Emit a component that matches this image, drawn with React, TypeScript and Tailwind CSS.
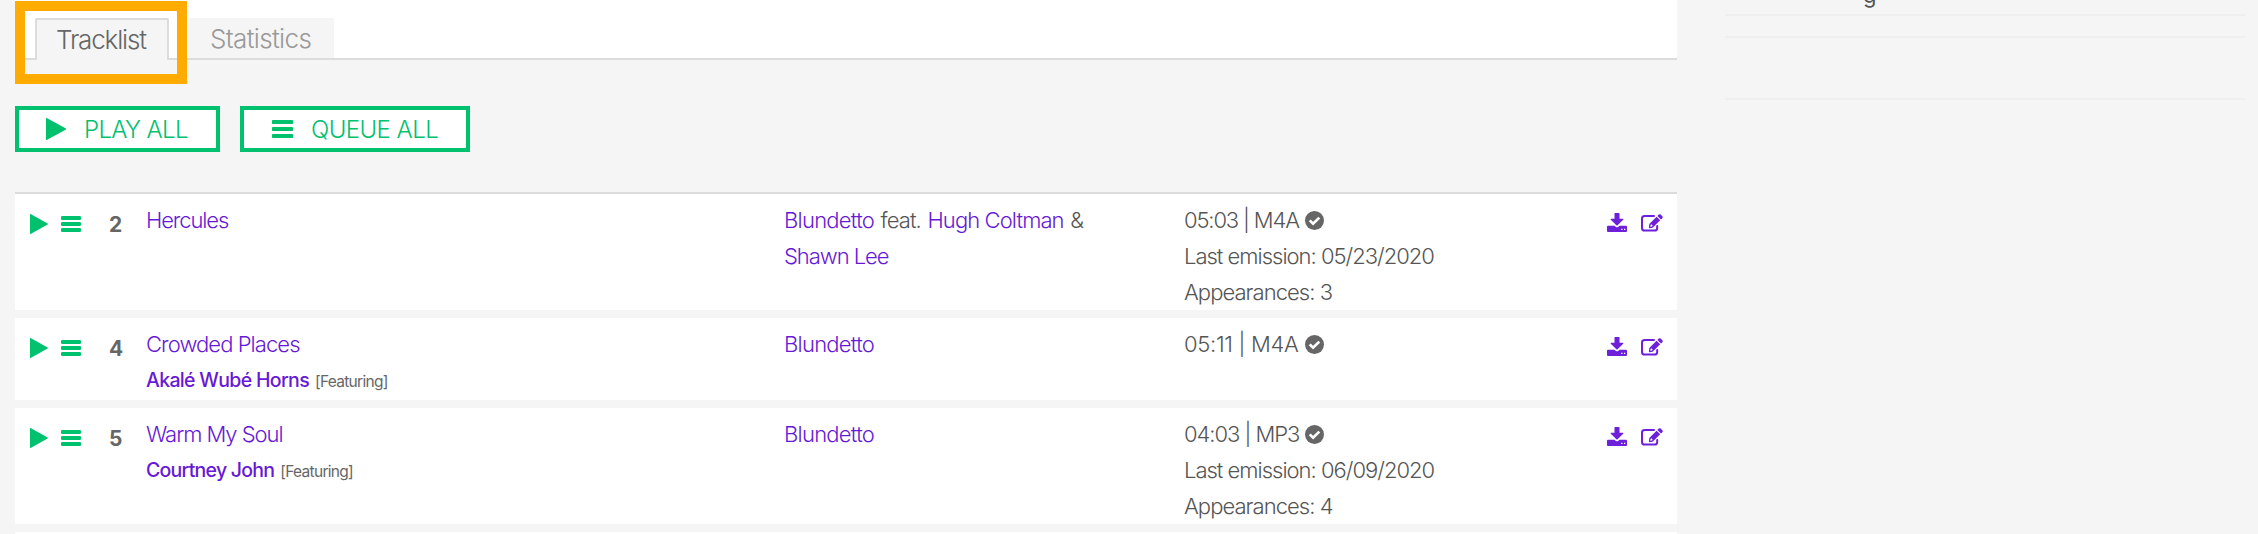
import React from "react";

const PlayIcon = ({ className }: { className: string }) => (
  <svg viewBox="0 0 18 20" preserveAspectRatio="none" className={className} fill="currentColor">
    <path d="M0 0.2Q0-.3.6 0L17.6 9.4Q18.4 10 17.6 10.6L.6 20Q0 20.3 0 19.8Z" />
  </svg>
);

const BarsIcon = () => (
  <svg viewBox="0 0 20 16" className="h-4 w-5" fill="currentColor">
    <rect width="20" height="4" rx="1.2" />
    <rect y="6" width="20" height="4" rx="1.2" />
    <rect y="12" width="20" height="4" rx="1.2" />
  </svg>
);

const QueueIcon = () => (
  <svg viewBox="0 0 21 18" className="h-[18px] w-[21px]" fill="currentColor">
    <rect width="21" height="4" rx="0.8" />
    <rect y="7" width="21" height="4" rx="0.8" />
    <rect y="14" width="21" height="4" rx="0.8" />
  </svg>
);

const CheckIcon = () => (
  <svg viewBox="0 0 19 19" className="ml-[6px] h-[19px] w-[19px]">
    <circle cx="9.5" cy="9.5" r="9.5" fill="#666" />
    <path d="M4.7 9.4L8.1 12.7L14.3 6.6" fill="none" stroke="#fff" strokeWidth="2.7" />
  </svg>
);

const DownloadIcon = () => (
  <svg viewBox="0 0 20 19" className="h-[19px] w-5" fill="currentColor">
    <path d="M8 0H12Q12.5 0 12.5 .5V5.8H15.8Q16.8 5.9 16.2 6.7L10.6 12.2Q10 12.7 9.4 12.2L3.8 6.7Q3.2 5.9 4.2 5.8H7.5V.5Q7.5 0 8 0Z" />
    <path
      fillRule="evenodd"
      d="M1 12.7H7.4L8.9 14Q10 14.7 11.1 14L12.6 12.7H19Q20 12.7 20 13.7V18Q20 19 19 19H1Q0 19 0 18V13.7Q0 12.7 1 12.7ZM14.2 15.7V17H15.5V15.7ZM17 15.7V17H18.3V15.7Z"
    />
  </svg>
);

const EditIcon = () => (
  <svg viewBox="0 0 22 18" className="h-[18px] w-[22px]">
    <path
      d="M13 2H3.6Q1 2 1 4.6V13.9Q1 16.5 3.6 16.5H13.6Q16.2 16.5 16.2 13.9V12"
      fill="none"
      stroke="currentColor"
      strokeWidth="2"
      strokeLinecap="round"
    />
    <path
      fillRule="evenodd"
      fill="currentColor"
      d="M15.6 2.7L19.2 6.3L11.6 13.7L8.6 14.2Q7.8 14.2 7.9 13.4L8.3 10ZM9.6 10.9L9.3 12.8L11 12.5L11.7 11.8L10.4 10.2Z"
    />
    <path fill="currentColor" d="M16.4 1.9L17.7.6Q18.7-.3 19.7.6L21.3 2.2Q22.2 3.2 21.3 4.2L20 5.5Z" />
  </svg>
);

type Part = { text: string; cls: string; link?: boolean };
type Track = {
  n: string;
  title: Part;
  guest?: Part;
  artists: Part[][];
  time: Part;
  info: Part[];
  height: string;
};

const blundetto: Part = { text: "Blundetto", cls: "tracking-[-0.75px]", link: true };

const tracks: Track[] = [
  {
    n: "2",
    title: { text: "Hercules", cls: "tracking-[-1.1px]" },
    artists: [
      [
        blundetto,
        { text: "feat.", cls: "tracking-[-0.9px]" },
        { text: "Hugh Coltman", cls: "tracking-[-0.9px]", link: true },
        { text: "&", cls: "tracking-[-0.9px]" },
      ],
      [{ text: "Shawn Lee", cls: "tracking-[-1.05px]", link: true }],
    ],
    time: { text: "05:03 | M4A", cls: "tracking-[-1.15px]" },
    info: [
      { text: "Last emission: 05/23/2020", cls: "tracking-[-1px]" },
      { text: "Appearances: 3", cls: "tracking-[-0.95px]" },
    ],
    height: "h-[116px]",
  },
  {
    n: "4",
    title: { text: "Crowded Places", cls: "tracking-[-0.93px]" },
    guest: { text: "Akalé Wubé Horns", cls: "tracking-[-0.67px]" },
    artists: [[blundetto]],
    time: { text: "05:11 | M4A", cls: "tracking-[-0.3px]" },
    info: [],
    height: "h-[82px]",
  },
  {
    n: "5",
    title: { text: "Warm My Soul", cls: "tracking-[-1.05px]" },
    guest: { text: "Courtney John", cls: "tracking-[-0.75px]" },
    artists: [[blundetto]],
    time: { text: "04:03 | MP3", cls: "tracking-[-1.05px]" },
    info: [
      { text: "Last emission: 06/09/2020", cls: "tracking-[-1px]" },
      { text: "Appearances: 4", cls: "tracking-[-0.95px]" },
    ],
    height: "h-[116px]",
  },
];

function TrackRow({ t }: { t: Track }) {
  return (
    <div className={"flex shrink-0 whitespace-nowrap bg-white pt-2 pl-[15px] leading-9 " + t.height}>
      <div className="flex w-[79px] gap-[13px] text-[#00c16e]">
        <PlayIcon className="mt-3 h-5 w-[18px]" />
        <div className="mt-[14px]">
          <BarsIcon />
        </div>
      </div>
      <div className="w-[37px] pt-[5px] text-[21px] font-bold text-[#666]">{t.n}</div>
      <div className="w-[638px] text-[#6719d6]">
        <div className={t.title.cls}>{t.title.text}</div>
        {t.guest && (
          <div className="flex items-baseline gap-[6px]">
            <span className={"text-[19.5px] font-medium " + t.guest.cls}>{t.guest.text}</span>
            <span className="text-[15.5px] font-normal tracking-[-0.7px] text-[#666]">[Featuring]</span>
          </div>
        )}
      </div>
      <div className="w-[400px]">
        {t.artists.map((line, i) => (
          <div key={i} className="flex gap-[6.5px]">
            {line.map((p) => (
              <span key={p.text} className={(p.link ? "text-[#6719d6] " : "text-[#555] ") + p.cls}>
                {p.text}
              </span>
            ))}
          </div>
        ))}
      </div>
      <div className="w-[423px] text-[#555]">
        <div className="flex items-center">
          <span className={"w-[115px] " + t.time.cls}>{t.time.text}</span>
          <CheckIcon />
        </div>
        {t.info.map((p) => (
          <div key={p.text} className={p.cls}>
            {p.text}
          </div>
        ))}
      </div>
      <div className="flex gap-[14px] pt-[11px] text-[#6d1fd9]">
        <DownloadIcon />
        <div className="pt-px">
          <EditIcon />
        </div>
      </div>
    </div>
  );
}

export default function App() {
  return (
    <div className="flex h-[534px] w-[2258px] overflow-hidden bg-[#f5f5f5] pl-[15px] font-['Inter','Liberation_Sans',sans-serif] text-[22px] font-light">
      <main className="relative flex w-[1662px] flex-col">
        <div className="flex h-[60px] shrink-0 border-b-2 border-[#dcdcdc] bg-white pt-[18px] pl-5 text-[26px] leading-[40px]">
          <div className="h-[42px] w-[134px] rounded-t-[2px] border-2 border-b-0 border-[#dcdcdc] bg-[#f5f5f5] pl-[19px] leading-[39px] tracking-[-1.15px] text-[#666]">
            Tracklist
          </div>
          <div className="ml-5 h-10 w-[145px] bg-[#f5f5f5] pl-[21px] leading-[42px] tracking-[-0.65px] text-[#999]">
            Statistics
          </div>
        </div>
        <div className="absolute top-px left-0 h-[83px] w-[172px] border-[10px] border-[#ffab00]" />
        <div className="mt-[46px] flex shrink-0 gap-5 text-2xl text-[#00c16e]">
          <button className="flex h-[46px] w-[205px] items-center border-4 border-[#00c16e] bg-white pl-[27px]">
            <PlayIcon className="h-[22px] w-5" />
            <span className="ml-[18px] pt-[2px] tracking-[-0.65px] whitespace-nowrap">PLAY ALL</span>
          </button>
          <button className="flex h-[46px] w-[230px] items-center border-4 border-[#00c16e] bg-white pl-7">
            <QueueIcon />
            <span className="ml-[18px] pt-[2px] tracking-[-0.55px] whitespace-nowrap">QUEUE ALL</span>
          </button>
        </div>
        <div className="mt-10 flex shrink-0 flex-col gap-2 border-t-2 border-[#dcdcdc]">
          {tracks.map((t) => (
            <TrackRow key={t.n} t={t} />
          ))}
          <div className="h-2 bg-white" />
        </div>
      </main>
      <aside className="ml-12 flex w-[520px] flex-col">
        <div className="flex h-4 items-end border-b-2 border-[#eee] pb-1 pl-[138px] text-[22px] leading-[30px] font-normal text-[#555]">
          g
        </div>
        <div className="h-[22px] border-b-2 border-[#eee]" />
        <div className="h-[62px] border-b-2 border-[#eee]" />
      </aside>
    </div>
  );
}
